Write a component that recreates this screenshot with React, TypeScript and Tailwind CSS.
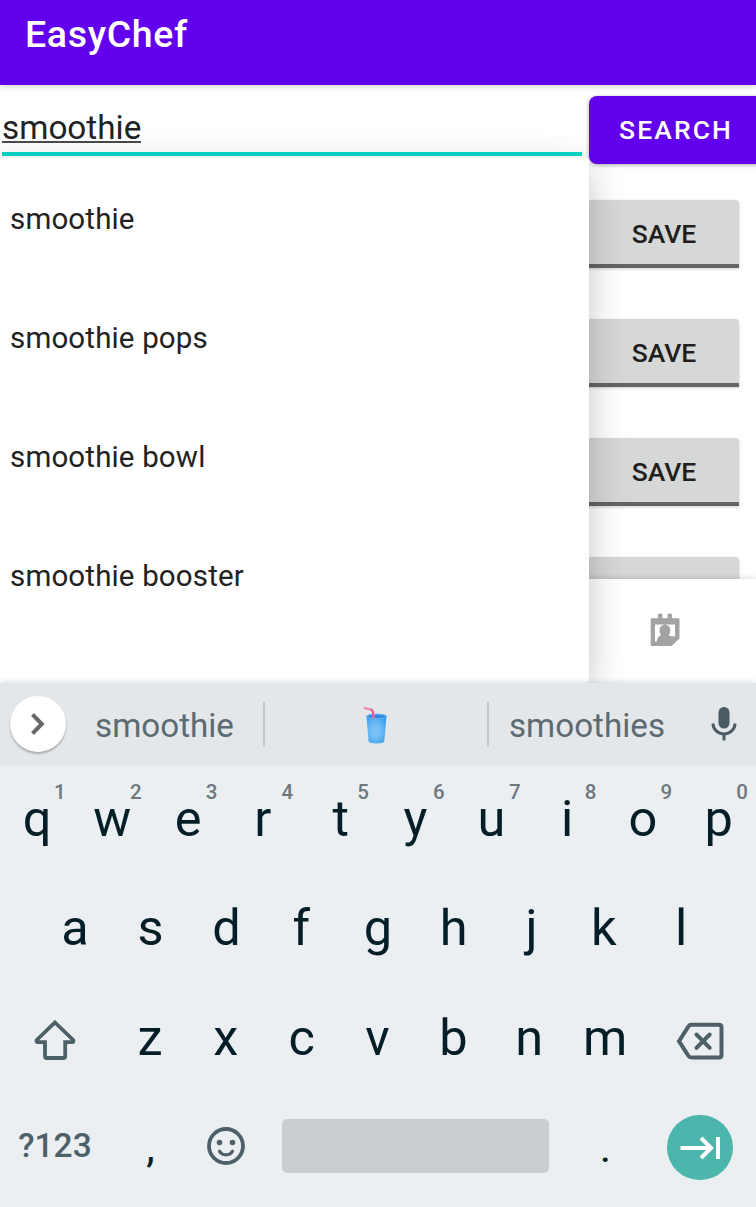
import React from 'react';

const suggestions = ['smoothie', 'smoothie pops', 'smoothie bowl', 'smoothie booster'];
const topRow = 'qwertyuiop'.split('');
const digits = '1234567890'.split('');
const middleRow = 'asdfghjkl'.split('');
const bottomRow = 'zxcvbnm'.split('');

const nudges: Record<string, string> = {
  q: 'translate-x-[0.5px]',
  r: '-translate-x-[1px]',
  t: 'translate-x-[1px]',
  f: '-translate-x-[1px]',
  j: 'translate-x-[2px]',
  k: '-translate-x-[1.5px]',
};

function SaveButton({ label }: { label?: string }) {
  return (
    <button className="block h-[68px] w-[152px] shrink-0 rounded-t-[4px] border-b-4 border-[#646565] bg-[#d6d8d7] pt-[1px] pl-[2px] text-center text-[26.5px] leading-[65px] font-medium text-[#1f1f1f] shadow-[0_1px_3px_rgba(0,0,0,0.2)]">
      {label}
    </button>
  );
}

function Letter({ char, digit }: { char: string; digit?: string }) {
  return (
    <div className="relative flex h-full items-center justify-center text-[50.5px] leading-none text-[#041e28]">
      <span className={nudges[char]}>{char}</span>
      {digit && (
        <span className="absolute top-[16px] left-[55.5px] text-[20.5px] leading-[22px] font-medium text-[#6d797f]">
          {digit}
        </span>
      )}
    </div>
  );
}

function ContactIcon() {
  return (
    <svg className="h-[34px] w-[30px]" viewBox="0 0 30 34">
      <path
        fill="#a3a3a3"
        fillRule="evenodd"
        d="M8 2Q8 .5 9.500 .5H11Q12.500 .5 12.500 2V5.200H17.500V2Q17.500 .5 19 .5H20.500Q22 .5 22 2V5.200H28Q29.500 5.200 29.500 6.500V25.500L21.500 33H2Q.7 33 .7 32V6.500Q.7 5.200 2 5.200H8ZM5 11.500V28.500H6.700Q7 24 11 22.200Q9.500 20.500 9.500 17.500Q9.500 12.200 15 11.500ZM15 11.500Q20.300 12.200 20.300 17.500Q20.300 20.500 18.700 22.200L20.500 23.300H25V11.500Z"
      />
    </svg>
  );
}

function CupIcon() {
  return (
    <svg className="h-[38px] w-[26px]" viewBox="0 0 26 38">
      <defs>
        <radialGradient id="drink" cx="45%" cy="55%" r="65%">
          <stop offset="0" stopColor="#7cc4f8" />
          <stop offset="0.4" stopColor="#70bcf5" />
          <stop offset="1" stopColor="#379be9" />
        </radialGradient>
      </defs>
      <path d="M3.500 10L5.500 35Q6 37.500 13.500 37.500T21.300 35L23.500 10Z" fill="url(#drink)" />
      <ellipse cx="13.500" cy="10.300" rx="10" ry="2.200" fill="#3089df" stroke="#65b7f4" />
      <path d="M.8 1.800L8.300 3.600Q9.700 4 9.900 6L10.600 12.200" fill="none" stroke="#f18bb0" strokeWidth="2.300" />
      <path d="M7.800 3.500Q9.500 4 9.800 6L10.600 12.200" fill="none" stroke="#e9568c" strokeWidth="2" />
    </svg>
  );
}

function MicIcon() {
  return (
    <svg className="h-[34px] w-[26px]" viewBox="0 0 26 34">
      <rect x="7.500" y="0" width="11" height="21.500" rx="5.500" fill="#4a5b63" />
      <path d="M2 16.500a11 10.500 0 0 0 22 0M13 27v6.500" fill="none" stroke="#4a5b63" strokeWidth="3" />
    </svg>
  );
}

function ShiftIcon() {
  return (
    <svg className="h-[42px] w-[44px]" viewBox="0 0 44 42">
      <path
        d="M22 3.500L40.200 21Q41 23.100 39.500 23.100H32.200V37Q32.200 39 30.500 39H13.700Q12 39 12 37V23.100H4.500Q3 23.100 3.800 21Z"
        fill="none"
        stroke="#4d5f67"
        strokeWidth="3.800"
      />
    </svg>
  );
}

function BackspaceIcon() {
  return (
    <svg className="h-[38px] w-[48px]" viewBox="0 0 48 38">
      <g fill="none" stroke="#4d5f67" strokeWidth="4">
        <path d="M15.500 2.800H43Q45.500 2.800 45.500 5.300V33Q45.500 35.500 43 35.500H15.500Q13.500 35.500 12.500 34L3 19.200L12.500 4.300Q13.500 2.800 15.500 2.800Z" />
        <path d="M20.500 12.500l13.200 13.400M33.700 12.500l-13.200 13.400" strokeLinecap="round" />
      </g>
    </svg>
  );
}

function SmileIcon() {
  return (
    <svg className="h-[38px] w-[38px]" viewBox="0 0 38 38">
      <circle cx="19" cy="19" r="17" fill="none" stroke="#4d5f67" strokeWidth="3.800" />
      <circle cx="12.500" cy="15.500" r="2.800" fill="#4d5f67" />
      <circle cx="25.500" cy="15.500" r="2.800" fill="#4d5f67" />
      <path d="M12.500 24.300Q14.500 27.800 19 27.800T25.500 24.300" fill="none" stroke="#4d5f67" strokeWidth="3.200" strokeLinecap="round" />
    </svg>
  );
}

export default function App() {
  return (
    <div className="flex h-[1207px] w-[756px] flex-col overflow-hidden bg-white font-['Roboto',sans-serif]">
      <header className="relative z-10 h-[85px] shrink-0 bg-[#6200ee] pl-[25px] shadow-[0_1px_7px_rgba(0,0,0,0.2)]">
        <h1 className="text-[37.5px] leading-[69px] font-medium tracking-[0.65px] text-white">EasyChef</h1>
      </header>

      <main className="relative flex h-[598px] shrink-0 flex-col overflow-hidden">
        <div className="flex h-[494px] shrink-0 overflow-hidden">
          <div className="w-[587px] shrink-0 pl-[2px]">
            <div className="h-[71px] w-[580px] border-b-4 border-[#06d9c6] pt-[24px]">
              <span className="inline-block h-[34px] border-b-2 border-[#4a4a4a] text-[33.3px] leading-[37px] text-[#222]">
                smoothie
              </span>
            </div>
          </div>
          <div className="flex w-[169px] shrink-0 flex-col">
            <button className="mt-[11px] ml-[2px] h-[68px] w-[180px] shrink-0 rounded-[8px] bg-[#6200ee] pl-[30px] text-left text-[26.5px] font-medium tracking-[2.1px] text-white shadow-[0_1px_4px_rgba(0,0,0,0.35)]">
              SEARCH
            </button>
            <div className="mt-[36px] flex flex-col gap-[51px]">
              <SaveButton label="SAVE" />
              <SaveButton label="SAVE" />
              <SaveButton label="SAVE" />
              <SaveButton />
            </div>
          </div>
        </div>
        <nav className="relative flex h-[104px] shrink-0 justify-end bg-white pt-[34px] pr-[76px] shadow-[0_-1px_6px_rgba(0,0,0,0.16)]">
          <ContactIcon />
        </nav>
        <ul className="absolute top-[73px] left-[-20px] h-[525px] w-[609px] rounded-[3px] bg-white pt-[2px] pl-[30px] shadow-[0_10px_36px_rgba(0,0,0,0.23)]">
          {suggestions.map((text) => (
            <li key={text} className="h-[119px] text-[29.5px] leading-[119px] tracking-[0.15px] text-[#222]">
              {text}
            </li>
          ))}
        </ul>
      </main>

      <section className="relative flex h-[524px] shrink-0 flex-col bg-[#ebeff2] shadow-[0_0_7px_rgba(0,0,0,0.18)]">
        <div className="flex h-[82px] shrink-0 items-center bg-[#e3e7ea] text-[33.2px] text-[#5c6a71]">
          <button className="ml-[10px] flex h-[56px] w-[56px] items-center justify-center rounded-full bg-white shadow-[0_2px_2px_rgba(0,0,0,0.25)]">
            <svg className="h-[24px] w-[16px]" viewBox="0 0 16 24">
              <path d="M2.500 2.500L11.800 12L2.500 21.500" fill="none" stroke="#6b6868" strokeWidth="4" />
            </svg>
          </button>
          <span className="w-[197px] pt-[3px] text-center">smoothie</span>
          <span className="h-[45px] w-[2px] bg-[#c3c8cb]" />
          <span className="flex w-[222px] justify-center pt-[2px]">
            <CupIcon />
          </span>
          <span className="h-[45px] w-[2px] bg-[#c3c8cb]" />
          <span className="w-[196px] pt-[3px] text-center">smoothies</span>
          <span className="ml-[26px]">
            <MicIcon />
          </span>
        </div>
        <div className="ml-[-1.4px] grid h-[108px] w-[758px] shrink-0 grid-cols-10">
          {topRow.map((char, i) => (
            <Letter key={char} char={char} digit={digits[i]} />
          ))}
        </div>
        <div className="ml-[37px] grid h-[110px] w-[682px] shrink-0 grid-cols-9">
          {middleRow.map((char) => (
            <Letter key={char} char={char} />
          ))}
        </div>
        <div className="flex h-[110px] shrink-0 items-center">
          <div className="flex w-[112px] justify-center pt-[3px] pr-[2px]">
            <ShiftIcon />
          </div>
          <div className="grid h-full w-[531px] grid-cols-7">
            {bottomRow.map((char) => (
              <Letter key={char} char={char} />
            ))}
          </div>
          <div className="flex w-[113px] justify-center pt-[6px]">
            <BackspaceIcon />
          </div>
        </div>
        <div className="flex h-[106px] shrink-0 items-center">
          <span className="w-[110px] pt-[1px] text-center text-[33.5px] font-medium text-[#4d5f67]">?123</span>
          <span className="w-[81px] pt-[3px] text-center text-[43px] text-[#041e28]">,</span>
          <div className="w-[91px] pl-[16px]">
            <SmileIcon />
          </div>
          <div className="h-[54px] w-[267px] rounded-[5px] bg-[#c9ced1]" />
          <span className="w-[113px] pt-[2px] text-center text-[43px] text-[#041e28]">.</span>
          <button className="mt-[3px] ml-[5px] flex h-[65px] w-[66px] items-center justify-center rounded-full bg-[#4db6ac]">
            <svg className="h-[24px] w-[42px]" viewBox="0 0 42 24">
              <path d="M1.500 12h31M22 2l10 10l-10 10M39 1v22" fill="none" stroke="white" strokeWidth="4" />
            </svg>
          </button>
        </div>
      </section>
    </div>
  );
}
